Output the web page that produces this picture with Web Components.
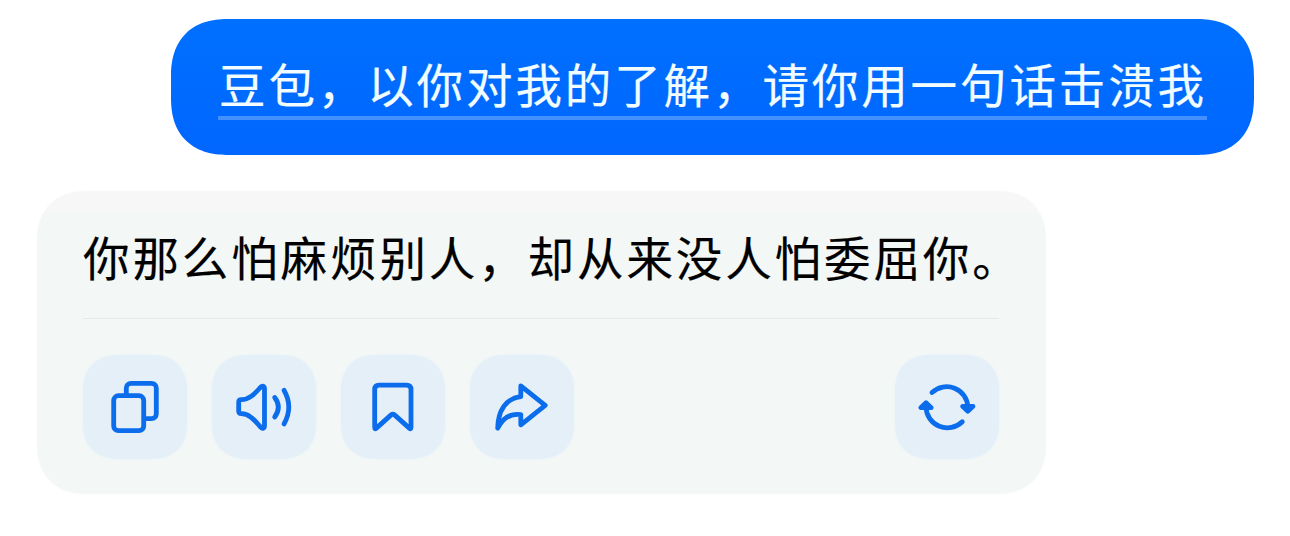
<!DOCTYPE html>
<html lang="zh-CN">
<head>
<meta charset="utf-8">
<title>豆包</title>
<style>
    body {
        margin: 0;
        background: #fff;
        font-family: "Noto Sans CJK SC", sans-serif;
    }
</style>
</head>
<body>
<x-chat>
    <x-question>豆包，以你对我的了解，请你用一句话击溃我</x-question>
    <x-answer>
        你那么怕麻烦别人，却从来没人怕委屈你。
        <x-action slot="actions" icon="copy" aria-label="复制"></x-action>
        <x-action slot="actions" icon="speak" aria-label="朗读"></x-action>
        <x-action slot="actions" icon="save" aria-label="收藏"></x-action>
        <x-action slot="actions" icon="share" aria-label="分享"></x-action>
        <x-action slot="retry" icon="retry" aria-label="重新生成"></x-action>
    </x-answer>
</x-chat>

<script>
"use strict";

const ICONS = {
    copy: `
        <path d="M43.3 40.5V33a4.7 4.7 0 0 1 4.7-4.7h20.6a4.7 4.7 0 0 1 4.7 4.7v26a4.7 4.7 0 0 1-4.7 4.7H61"/>
        <rect x="30.7" y="40.7" width="30" height="35" rx="4.7"/>`,
    speak: `
        <path d="M29.3 44.7C38 44.7 43.5 37.7 48.6 32.2C50.5 30.2 52.5 31 52.5 33.5V70.8C52.5 73.3 50.5 74.1 48.6 72.1C43.5 66.5 38 58.7 29.3 58.7Q26.7 58.7 26.7 56.1V47.3Q26.7 44.7 29.3 44.7Z"/>
        <path d="M62.7 42.5Q70 52 62.7 62"/>
        <path d="M72 35.3Q81.6 52 72 69"/>`,
    save: `
        <path d="M38 30.2H65.6Q70 30.2 70 34.6V72.6Q70 74.6 68.3 73.1L53.5 59.9Q51.8 58.5 50.1 59.9L35.4 73.1Q33.7 74.6 33.7 72.6V34.6Q33.7 30.2 38 30.2Z"/>`,
    share: `
        <path d="M50.8 30.9L75.2 50.3L50.8 69.8V59.6C41.5 58.3 33 62.5 27.7 73.2C28 56 35.5 43.7 50.8 41.5Z"/>`,
    retry: `
        <path d="M37 37.5A21.3 21.3 0 0 1 72.9 52"/>
        <path d="M67.3 66.7A21.3 21.3 0 0 1 31 52"/>
        <path class="solid" d="M67.6 51.3H78L72.8 56.2Z"/>
        <path class="solid" d="M25.8 52.7H36.2L31 47.8Z"/>`
};

class Chat extends HTMLElement {
    constructor() {
        super();
        this.attachShadow({mode: "open"}).innerHTML = `
            <style>
                :host {
                    display: flex;
                    flex-direction: column;
                    gap: 36px;
                    box-sizing: border-box;
                    height: 536px;
                    padding: 19px 36px 0 36.5px;
                }
            </style>
            <slot></slot>
        `;
    }
}

class Question extends HTMLElement {
    constructor() {
        super();
        this.attachShadow({mode: "open"}).innerHTML = `
            <style>
                :host {
                    display: block;
                    align-self: flex-end;
                    box-sizing: border-box;
                    width: 1083px;
                    height: 136px;
                    padding: 34px 0 0 47px;
                    border-radius: 58px;
                    corner-shape: superellipse(1.25);
                    background: linear-gradient(#0070ff, #0066ff);
                    color: #f2fdff;
                }
                span {
                    display: block;
                    width: 988px;
                    height: 63px;
                    padding-left: 1px;
                    border-bottom: 4px solid #4590ff;
                    font-size: 46.5px;
                    line-height: 60px;
                    letter-spacing: 2.9px;
                    white-space: nowrap;
                    -webkit-text-stroke: 0.2px;
                }
            </style>
            <span><slot></slot></span>
        `;
    }
}

class Answer extends HTMLElement {
    constructor() {
        super();
        this.attachShadow({mode: "open"}).innerHTML = `
            <style>
                :host {
                    display: flex;
                    flex-direction: column;
                    align-self: flex-start;
                    box-sizing: border-box;
                    width: 1009.5px;
                    height: 303px;
                    padding: 0 47px 0 46.5px;
                    border-radius: 50px;
                    corner-shape: superellipse(1.2);
                    background: linear-gradient(#f7f7f7 20px, #f3f7f6 22px);
                    box-shadow: 0 0 2px #f6f9f8;
                    color: #000;
                }
                .text {
                    height: 127px;
                    padding-top: 32px;
                    box-sizing: border-box;
                    font-size: 46.5px;
                    line-height: 66px;
                    letter-spacing: 2.9px;
                    white-space: nowrap;
                    -webkit-text-stroke: 0.2px;
                }
                .line {
                    height: 1px;
                    background: #e7eaea;
                }
                .bar {
                    display: flex;
                    gap: 25px;
                    padding-top: 36px;
                }
                .end {
                    margin-left: auto;
                }
            </style>
            <div class="text"><slot></slot></div>
            <div class="line"></div>
            <div class="bar">
                <slot name="actions"></slot>
                <div class="end"><slot name="retry"></slot></div>
            </div>
        `;
    }
}

class Action extends HTMLElement {
    constructor() {
        super();
        this.attachShadow({mode: "open"});
    }

    connectedCallback() {
        this.shadowRoot.innerHTML = `
            <style>
                :host {
                    display: block;
                    width: 104px;
                    height: 104px;
                    border-radius: 36px;
                    corner-shape: superellipse(1.2);
                    background: #e4eff8;
                    box-shadow: 0 0 3px #e8f2f8;
                }
                svg {
                    display: block;
                    fill: none;
                    stroke: #0b6cec;
                    stroke-width: 4.8;
                    stroke-linecap: round;
                    stroke-linejoin: round;
                }
                .solid {
                    fill: #0b6cec;
                }
            </style>
            <svg width="104" height="104" viewBox="0 0 104 104">${ICONS[this.getAttribute("icon")]}</svg>
        `;
    }
}

customElements.define("x-chat", Chat);
customElements.define("x-question", Question);
customElements.define("x-answer", Answer);
customElements.define("x-action", Action);
</script>
</body>
</html>
